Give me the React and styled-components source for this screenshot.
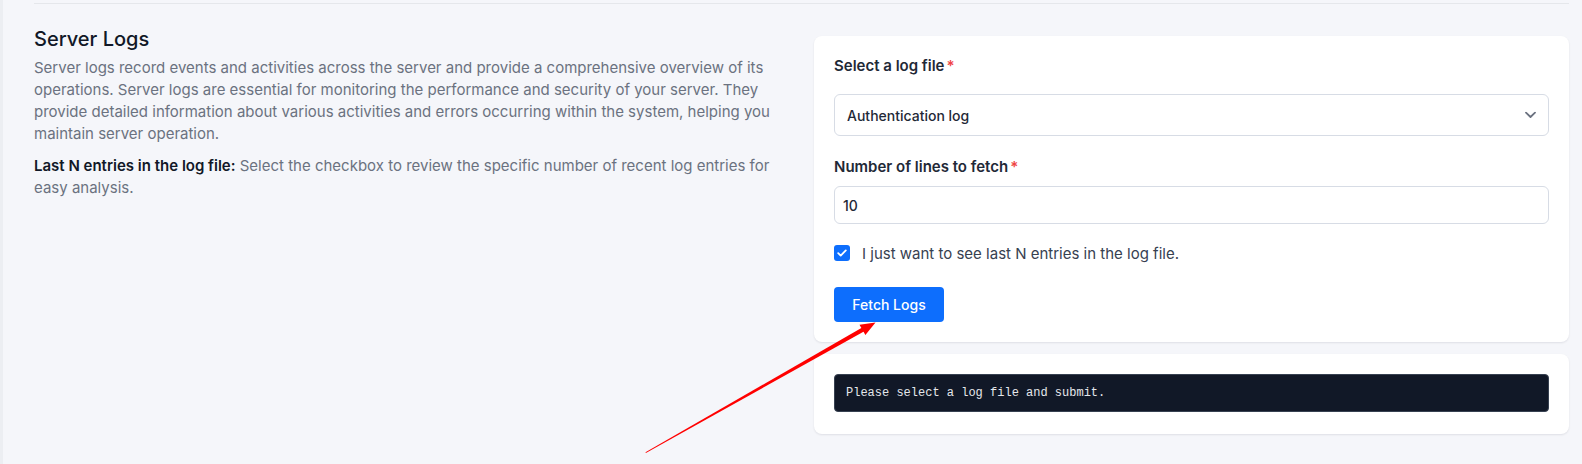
import React from "react";
import styled, { createGlobalStyle } from "styled-components";

const Global = createGlobalStyle`
  html, body { margin: 0; padding: 0; }
  body {
    background: #eceef2;
    font-family: Inter, "Noto Sans", sans-serif;
    color: #111827;
    -webkit-font-smoothing: antialiased;
  }
  * { box-sizing: border-box; }
`;

const Page = styled.div`
  position: relative;
  display: flex;
  min-height: 464px;
`;

const EdgeStrip = styled.div`
  width: 3px;
  flex: none;
  background: #eceef2;
`;

const Main = styled.main`
  flex: 1;
  background: #f5f6fa;
  padding: 3px 13px 0 31px;
`;

const Section = styled.section`
  border-top: 1px solid #e5e7eb;
  display: grid;
  grid-template-columns: 1fr 755px;
  gap: 32px;
  padding-top: 32px;
  padding-bottom: 30px;
`;

const Intro = styled.div`
  margin-top: -11px;
`;

const Title = styled.h2`
  margin: 0;
  font-size: 20px;
  line-height: 28px;
  font-weight: 500;
  color: #111827;
`;

const Paragraph = styled.p`
  margin: ${(p) => (p.$first ? "4px" : "10px")} 0 0;
  font-size: 15px;
  line-height: 22px;
  color: #6b7280;
`;

const Lead = styled.strong`
  font-weight: 600;
  color: #111827;
`;

const Column = styled.div`
  display: flex;
  flex-direction: column;
  gap: 12px;
`;

const Card = styled.div`
  background: #ffffff;
  border-radius: 8px;
  box-shadow: 0 1px 2px rgba(16, 24, 40, 0.06), 0 1px 3px rgba(16, 24, 40, 0.04);
  padding: ${(p) => p.$pad || "20px"};
  display: flex;
  flex-direction: column;
`;

const Label = styled.label`
  display: block;
  font-size: 15px;
  line-height: 20px;
  font-weight: 600;
  color: #1f2937;
  margin: ${(p) => p.$m || "0"};
`;

const Required = styled.span`
  color: #ef4444;
  margin-left: 2px;
`;

const SelectWrap = styled.div`
  position: relative;
  margin-top: 18px;
`;

const Select = styled.select`
  appearance: none;
  -webkit-appearance: none;
  width: 100%;
  height: 42px;
  border: 1px solid #d7dce5;
  border-radius: 6px;
  background: #fff;
  padding: 0 40px 0 12px;
  font-family: Inter, "Noto Sans", sans-serif;
  font-size: 14px;
  font-weight: 500;
  color: #1f2937;
  outline: none;
`;

const Chevron = styled.svg`
  position: absolute;
  right: 13px;
  top: 50%;
  transform: translateY(-50%);
  pointer-events: none;
`;

const Input = styled.input`
  width: 100%;
  height: 38px;
  margin-top: 9px;
  border: 1px solid #d7dce5;
  border-radius: 6px;
  background: #fff;
  padding: 0 8px;
  font-family: Inter, "Noto Sans", sans-serif;
  font-size: 14px;
  font-weight: 500;
  color: #1f2937;
  outline: none;
`;

const CheckRow = styled.label`
  display: flex;
  align-items: center;
  gap: 12px;
  margin-top: 18px;
  height: 22px;
  font-size: 15px;
  color: #374151;
`;

const CheckBox = styled.span`
  width: 16px;
  height: 16px;
  border-radius: 3px;
  background: #0d6efd;
  display: inline-flex;
  align-items: center;
  justify-content: center;
  flex: none;
`;

const Button = styled.button`
  align-self: flex-start;
  margin-top: 23px;
  height: 35px;
  width: 110px;
  border: none;
  border-radius: 4px;
  background: #0d6efd;
  color: #fff;
  font-family: Inter, "Noto Sans", sans-serif;
  font-size: 14px;
  font-weight: 500;
  cursor: pointer;
`;

const Console = styled.pre`
  margin: 0;
  height: 38px;
  display: flex;
  align-items: center;
  background: #111827;
  border: 1px solid #374151;
  border-radius: 4px;
  padding: 0 11px;
  font-family: "Liberation Mono", "DejaVu Sans Mono", monospace;
  font-size: 12px;
  color: #e5e7eb;
`;

const ArrowLayer = styled.svg`
  position: absolute;
  left: 0;
  top: 0;
  pointer-events: none;
`;

function Arrow() {
  const tail = [645.7, 452.7];
  const tip = [875.5, 322.5];
  const dx = tip[0] - tail[0];
  const dy = tip[1] - tail[1];
  const len = Math.hypot(dx, dy);
  const u = [dx / len, dy / len];
  const n = [-u[1], u[0]];
  const headLen = 15;
  const headHalf = 6;
  const base = [tip[0] - u[0] * headLen, tip[1] - u[1] * headLen];
  const shaftEnd = [tip[0] - u[0] * (headLen - 3), tip[1] - u[1] * (headLen - 3)];
  const pt = (p, k, w) => `${p[0] + n[0] * w * k},${p[1] + n[1] * w * k}`;
  const shaft = [pt(tail, 1, 0.4), pt(shaftEnd, 1, 2.2), pt(shaftEnd, -1, 2.2), pt(tail, -1, 0.4)].join(" ");
  const head = [`${tip[0]},${tip[1]}`, pt(base, 1, headHalf), pt(base, -1, headHalf)].join(" ");
  return (
    <ArrowLayer width="1582" height="464" viewBox="0 0 1582 464">
      <polygon points={shaft} fill="#ff0000" />
      <polygon points={head} fill="#ff0000" />
    </ArrowLayer>
  );
}

export default function App() {
  return (
    <>
      <Global />
      <Page>
        <EdgeStrip />
        <Main>
          <Section>
            <Intro>
              <Title>Server Logs</Title>
              <Paragraph $first>
                Server logs record events and activities across the server and provide a comprehensive overview of its
                operations. Server logs are essential for monitoring the performance and security of your server. They
                provide detailed information about various activities and errors occurring within the system, helping you
                maintain server operation.
              </Paragraph>
              <Paragraph>
                <Lead>Last N entries in the log file:</Lead> Select the checkbox to review the specific number of recent log
                entries for easy analysis.
              </Paragraph>
            </Intro>
            <Column>
              <Card>
                <Label htmlFor="logfile">
                  Select a log file<Required>*</Required>
                </Label>
                <SelectWrap>
                  <Select id="logfile" defaultValue="auth">
                    <option value="auth">Authentication log</option>
                    <option value="sys">System log</option>
                  </Select>
                  <Chevron width="11" height="7" viewBox="0 0 11 7" fill="none">
                    <path d="M1 1.2l4.5 4.3L10 1.2" stroke="#6b7280" strokeWidth="1.8" strokeLinecap="round" strokeLinejoin="round" />
                  </Chevron>
                </SelectWrap>
                <Label htmlFor="lines" $m="21px 0 0">
                  Number of lines to fetch<Required>*</Required>
                </Label>
                <Input id="lines" defaultValue="10" />
                <CheckRow>
                  <CheckBox>
                    <svg width="10" height="8" viewBox="0 0 10 8" fill="none">
                      <path d="M1.2 4.2l2.5 2.4L8.8 1.4" stroke="#fff" strokeWidth="1.8" strokeLinecap="round" strokeLinejoin="round" />
                    </svg>
                  </CheckBox>
                  I just want to see last N entries in the log file.
                </CheckRow>
                <Button type="button">Fetch Logs</Button>
              </Card>
              <Card $pad="20px 20px 22px">
                <Console>Please select a log file and submit.</Console>
              </Card>
            </Column>
          </Section>
        </Main>
        <Arrow />
      </Page>
    </>
  );
}
